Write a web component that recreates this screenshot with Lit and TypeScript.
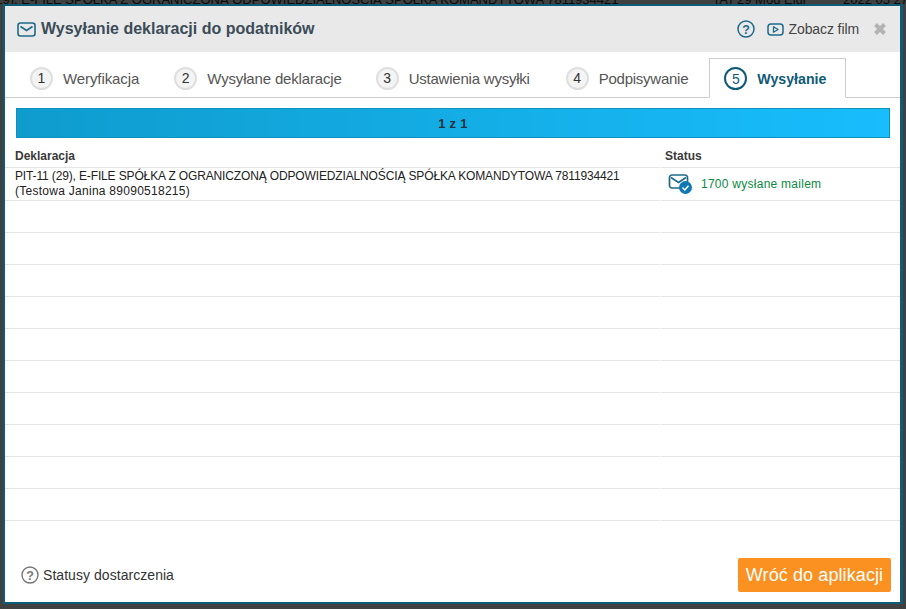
import { LitElement, html, css } from "lit";
import { customElement } from "lit/decorators.js";

const steps = ["Weryfikacja", "Wysyłane deklaracje", "Ustawienia wysyłki", "Podpisywanie", "Wysyłanie"];

@customElement("app-root")
export class AppRoot extends LitElement {
  static styles = css`
    :host { display: block; width: 906px; height: 609px; overflow: hidden; background: #3f4040; font-family: "Liberation Sans", Arial, sans-serif; color: #333; }
    * { box-sizing: border-box; }
    .page { height: 609px; padding: 4px 3px 5px 3px; position: relative; }
    .behind { position: absolute; left: 0; top: -9px; width: 906px; height: 18px; font-size: 13px; line-height: 18px; color: #0c0c0c; white-space: nowrap; }
    .behind span { position: absolute; top: 0; }
    .b1 { left: -50px; }
    .b2 { left: 715px; }
    .b3 { left: 737px; }
    .b4 { left: 843px; }
    .dialog { position: relative; height: 600px; width: 900px; background: #fff; border: 2px solid #0f5a76; border-width: 2px 3px 2px 2px; display: flex; flex-direction: column; }
    .head { height: 46px; flex: none; background: #e9e9e9; display: flex; align-items: center; padding: 0 13px 0 12px; }
    .title { font-size: 16px; font-weight: bold; color: #3c4c58; margin-left: 5px; flex: 1; }
    .film { font-size: 14px; letter-spacing: -0.1px; color: #444; margin-left: 5px; margin-right: 14px; }
    .ic { display: block; flex: none; }
    .help { margin-right: 12px; }
    .tabs { height: 46px; flex: none; display: flex; align-items: stretch; border-bottom: 1px solid #ccc; padding-left: 25px; }
    .tab { display: flex; align-items: center; font-size: 15px; color: #555; margin-top: 6px; padding-top: 1px; }
    .num { width: 23px; height: 23px; border-radius: 50%; background: #f4f4f4; border: 2px solid #dfdfdf; display: flex; align-items: center; justify-content: center; font-size: 14px; letter-spacing: 0; color: #333; margin-right: 10px; }
    .tab.t1 { margin-right: 35px; letter-spacing: -0.09px; }
    .tab.t2 { margin-right: 34px; letter-spacing: -0.16px; }
    .tab.t3 { margin-right: 36px; letter-spacing: -0.22px; }
    .tab.t4 { margin-right: 21px; letter-spacing: -0.25px; }
    .tab.active { border: 1px solid #ccc; border-bottom: 1px solid #fff; margin-bottom: -1px; padding: 1px 19px 0 14px; font-weight: bold; font-size: 14.2px; color: #0f5a76; }
    .tab.active .num { background: #fff; border-color: #0f5a76; color: #0f5a76; font-weight: normal; }
    .content { padding: 10px 10px 0 11px; flex: none; }
    .bar { height: 30px; background: linear-gradient(90deg, #0f9ccd, #18bdfd); border: 1px solid #0f91bd; display: flex; align-items: center; justify-content: center; font-size: 13px; letter-spacing: 0.3px; font-weight: bold; color: #263238; }
    .grid { display: grid; grid-template-columns: 655px 1fr; font-size: 12px; }
    .th { height: 30px; font-weight: bold; padding: 11px 0 0 10px; color: #3a3a3a; border-bottom: 1px solid #e4e4e4; }
    .th.right { padding-left: 4px; margin-left: 1px; }
    .cell { height: 32px; border-bottom: 1px solid #e4e4e4; }
    .cell.right { margin-left: 1px; }
    .cell.first { height: 33px; padding: 1px 0 0 10px; line-height: 15px; color: #222; }
    .l1 { letter-spacing: -0.14px; }
    .l2 { letter-spacing: 0.27px; }
    .cell.status { display: flex; align-items: center; padding: 0 0 0 7px; color: #0a8a3f; gap: 6px; letter-spacing: 0.26px; }
    .spacer { flex: 1; }
    .foot { display: flex; align-items: flex-end; justify-content: space-between; padding: 0 9px 10px 16px; }
    .st { display: flex; align-items: center; gap: 4px; font-size: 14px; letter-spacing: 0.05px; color: #333; padding-bottom: 8px; }
    .btn { background: #fa9120; color: #fff; font-size: 18px; letter-spacing: 0.1px; height: 34px; width: 153px; border-radius: 2px; display: flex; align-items: center; justify-content: center; font-family: inherit; border: 0; padding: 0; }
  `;

  private mail() {
    return html`<svg class="ic" width="19" height="15" viewBox="0 0 19 15" fill="none" stroke="#1d6a8a" stroke-width="1.6"><rect x="1" y="1" width="17" height="13" rx="2.5"/><path d="M3.5 4.5 9.5 8.5 15.5 4.5"/></svg>`;
  }

  render() {
    const rows = Array.from({ length: 10 });
    return html`<div class="page">
      <div class="behind">
        <span class="b1">PIT-11 (29), E-FILE SPÓŁKA Z OGRANICZONĄ ODPOWIEDZIALNOŚCIĄ SPÓŁKA KOMANDYTOWA 7811934421</span>
        <span class="b2">(A)</span>
        <span class="b3">29 Mód Eluj</span>
        <span class="b4">2022 05 27</span>
      </div>
      <div class="dialog">
        <div class="head">
          ${this.mail()}
          <div class="title">Wysyłanie deklaracji do podatników</div>
          <svg class="ic help" width="18" height="18" viewBox="0 0 18 18"><circle cx="9" cy="9" r="8" fill="none" stroke="#1d6a8a" stroke-width="1.5"/><text x="9" y="13.5" font-size="12.5" font-weight="bold" text-anchor="middle" fill="#1d6a8a" font-family="Liberation Sans">?</text></svg>
          <svg class="ic" width="17" height="13" viewBox="0 0 17 13" fill="none"><rect x="1" y="1" width="15" height="11" rx="3" stroke="#1d6a8a" stroke-width="1.5"/><path d="M6.5 3.8v5.4l4.6-2.7z" stroke="#1d6a8a" stroke-width="1.3" stroke-linejoin="round"/></svg>
          <span class="film">Zobacz film</span>
          <svg class="ic" width="14" height="14" viewBox="0 0 14 14"><path d="M2.5 2.5 11.5 11.5M11.5 2.5 2.5 11.5" stroke="#b3b3b3" stroke-width="4"/></svg>
        </div>
        <div class="tabs">
          ${steps.map((s, i) => html`<div class="tab t${i + 1} ${i === 4 ? "active" : ""}"><span class="num">${i + 1}</span>${s}</div>`)}
        </div>
        <div class="content"><div class="bar">1 z 1</div></div>
        <div class="grid">
          <div class="th">Deklaracja</div><div class="th right">Status</div>
          <div class="cell first"><span class="l1">PIT-11 (29), E-FILE SPÓŁKA Z OGRANICZONĄ ODPOWIEDZIALNOŚCIĄ SPÓŁKA KOMANDYTOWA 7811934421</span><br /><span class="l2">(Testowa Janina 89090518215)</span></div>
          <div class="cell first right status">
            <svg class="ic" width="27" height="20" viewBox="0 0 27 20" fill="none"><path d="M18 14H4a2.5 2.5 0 0 1-2.5-2.5v-8A2.5 2.5 0 0 1 4 1h13a2.5 2.5 0 0 1 2.5 2.5V8" stroke="#1d6a8a" stroke-width="1.7"/><path d="M3 3.5 10.5 8.5 18 3.5" stroke="#1d6a8a" stroke-width="1.7"/><circle cx="17.5" cy="13.5" r="6.5" fill="#0f78b5"/><path d="M14.5 13.5 16.8 16 20.5 11.8" stroke="#fff" stroke-width="1.5"/></svg>
            <span>1700 wysłane mailem</span>
          </div>
          ${rows.map(() => html`<div class="cell"></div><div class="cell right"></div>`)}
        </div>
        <div class="spacer"></div>
        <div class="foot">
          <div class="st"><svg class="ic" width="18" height="18" viewBox="0 0 18 18"><circle cx="9" cy="9" r="8" fill="none" stroke="#777" stroke-width="1.4"/><text x="9" y="13.5" font-size="12.5" font-weight="bold" text-anchor="middle" fill="#777" font-family="Liberation Sans">?</text></svg>Statusy dostarczenia</div>
          <button class="btn">Wróć do aplikacji</button>
        </div>
      </div>
    </div>`;
  }
}
